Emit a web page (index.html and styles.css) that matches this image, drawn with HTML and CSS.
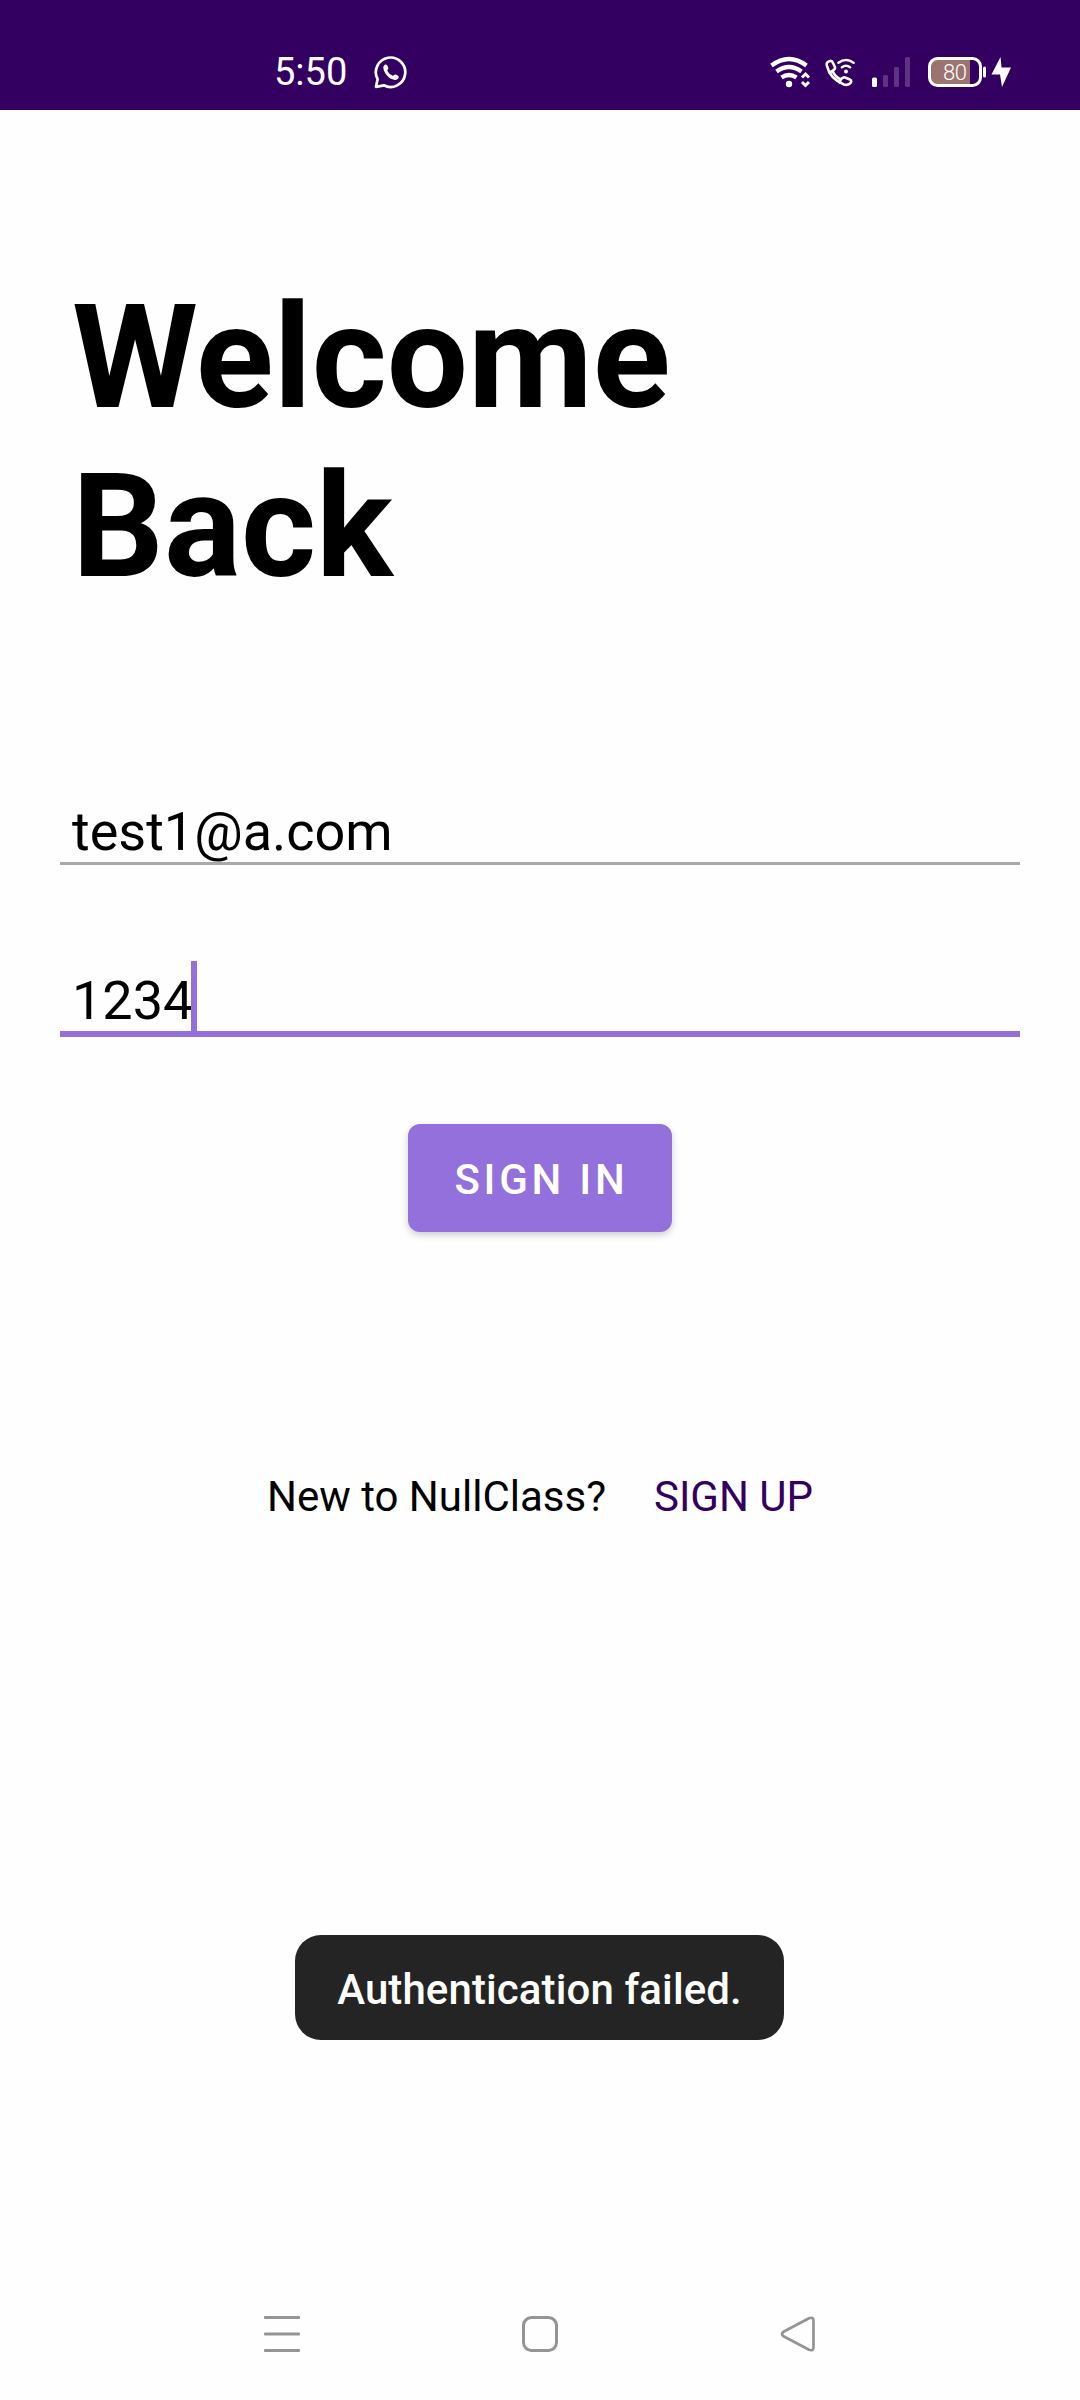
FILE: index.html
```html
<!DOCTYPE html>
<html lang="en">
<head>
<meta charset="utf-8">
<title>Sign in</title>
<link rel="stylesheet" href="styles.css">
</head>
<body>
<div class="screen">
  <header class="status">
    <span class="clock">5:50</span>
    <svg class="whatsapp" width="34" height="34" viewBox="0 0 34 34">
      <path d="M3.6 24.2A14.7 14.7 0 1 1 9.8 30.300L2 31.800Z" fill="none" stroke="#fff" stroke-width="2.700" stroke-linejoin="round"/>
      <path d="M9.300 12.500C9.100 10.800 10.900 9.200 12 9.400C13.200 9.600 14.300 12.100 14.300 13.200C14.200 14.200 13.100 14.700 13.300 15.400C14.400 17.800 16.300 19.600 18.700 20.700C19.600 21 20.200 19.600 21.200 19.600C22.300 19.700 24.700 20.900 24.800 22C24.900 23.600 22.700 25 20.800 24.900C15 24.100 9.800 18.200 9.300 12.500Z" fill="#fff"/>
    </svg>
    <div class="indicators">
      <svg width="260" height="34" viewBox="770 56 260 34">
        <g fill="none" stroke="#fff" stroke-width="4.200">
          <path d="M771.500 65.500Q789 52.500 806.500 65.500"/>
          <path d="M776.500 71.500Q789 62.500 801.500 71.500"/>
          <path d="M781.500 77.500Q789 72.500 796.500 77.500"/>
        </g>
        <circle cx="789" cy="84" r="3.200" fill="#fff"/>
        <path d="M802 77.500L805.500 74L809 77.500M802 82L805.500 85.500L809 82" fill="none" stroke="#fff" stroke-width="3"/>
        <g fill="none" stroke="#fff" stroke-width="2.600" stroke-linejoin="round" stroke-linecap="round">
          <path d="M827 66Q825.500 62 830 61Q832 60.500 833 63L835 67Q835.500 69 832.500 71Q835 76.500 840.500 79.500Q843 76.800 845 77.500L850 79.500Q852.500 81 850 83.500Q847.500 85.500 844 84.500Q830 79 827 66Z"/>
          <path d="M832.500 71L829.500 72.500M840.500 79.500L839.500 82.500"/>
          <path d="M838.500 62.700Q846 57.300 853.500 62.700M842 67.200Q846 64.300 850 67.200"/>
        </g>
        <circle cx="846" cy="71.500" r="2" fill="#fff"/>
        <rect x="872" y="77.500" width="5" height="9.500" rx="1.500" fill="#fff"/>
        <g fill="#5d3483">
          <rect x="883" y="75" width="5" height="12" rx="1.500"/>
          <rect x="894" y="67" width="5" height="20" rx="1.500"/>
          <rect x="905" y="57" width="5" height="30" rx="1.500"/>
        </g>
        <path d="M936 60H970V84H936Q930 84 930 78V66Q930 60 936 60Z" fill="#9b736f"/>
        <rect x="929.500" y="58.500" width="51" height="27" rx="8" fill="none" stroke="#fff" stroke-width="3"/>
        <rect x="983" y="66.500" width="3" height="11" rx="1.500" fill="#fff"/>
        <text class="level" x="943" y="79.500">80</text>
        <path d="M1000.500 57L991.500 74.500H1000L1002 87L1011 67.500H1001.500Z" fill="#fff"/>
      </svg>
    </div>
  </header>

  <main class="content">
    <h1 class="title">Welcome<br>Back</h1>
    <div class="field"><span class="value">test1@a.com</span></div>
    <div class="field field-focused"><span class="value">1234</span><span class="caret"></span></div>
    <button class="sign-in" type="button">SIGN IN</button>
    <p class="register"><span>New to NullClass?</span><a class="sign-up">SIGN UP</a></p>
    <div class="toast">Authentication failed.</div>
  </main>

  <nav class="navbar">
    <svg width="36" height="36" viewBox="0 0 36 36" fill="#949494">
      <rect width="36" height="3" rx="1"/><rect y="16.500" width="36" height="3" rx="1"/><rect y="33" width="36" height="3" rx="1"/>
    </svg>
    <svg width="36" height="36" viewBox="0 0 36 36">
      <rect x="1.500" y="1.500" width="33" height="33" rx="8" fill="none" stroke="#949494" stroke-width="3"/>
    </svg>
    <svg width="36" height="36" viewBox="0 0 36 36">
      <path d="M29 2.200L3.500 15.800Q0.500 18 3.500 20.200L29 33.800Q33.300 35.300 33.500 31.500V4.500Q33.300 0.700 29 2.200Z" fill="none" stroke="#949494" stroke-width="2.700" stroke-linejoin="round"/>
    </svg>
  </nav>
</div>
</body>
</html>
```
FILE: styles.css
```css
* { box-sizing: border-box; }
body { margin: 0; background: #fefefe; font-family: Roboto, sans-serif; color: #000; }
.screen { width: 1080px; height: 2400px; display: flex; flex-direction: column; }
.status { height: 110px; flex: none; background: #330062; color: #fff; display: flex; align-items: flex-start; padding: 0 50px 0 274px; }
.clock { font-size: 38px; line-height: 44px; margin-top: 50px; width: 100px; }
.whatsapp { margin-top: 55px; }
.indicators { margin: 56px 0 0 362px; height: 34px; }
.indicators svg { display: block; }
.level { font: 300 22px Roboto, sans-serif; letter-spacing: -0.5px; fill: #fff; }
.content { flex: 1; display: flex; flex-direction: column; align-items: center; padding: 163px 60px 0; }
.title { align-self: stretch; margin: 0 0 181px; padding: 0 12px; font-size: 144px; line-height: 169px; font-weight: 700; }
.field { align-self: stretch; display: flex; align-items: flex-end; height: 73px; padding: 0 12px; border-bottom: 3px solid #a9a9a9; font-size: 54px; line-height: 61px; }
.field-focused { height: 76px; margin-top: 96px; border-bottom: 6px solid #9370db; }
.caret { width: 6px; height: 70px; margin-left: -2px; background: #9370db; }
.sign-in { width: 264px; height: 108px; margin: 87px 0 0; padding: 4px 0 0 3px; border: 0; border-radius: 12px; background: #9370db; color: #fff; font: 500 42px/50px Roboto, sans-serif; letter-spacing: 3.750px; box-shadow: 0 3px 7px rgba(0, 0, 0, .2); }
.register { display: flex; gap: 48px; margin: 240px 0 0; font-size: 42px; line-height: 50px; }
.sign-up { color: #330062; }
.toast { margin: 413px 1px 0 0; width: 489px; height: 105px; padding-top: 4px; display: flex; align-items: center; justify-content: center; border-radius: 26px; background: #242424; color: #fff; font-size: 42px; font-weight: 500; letter-spacing: 0.1px; }
.navbar { flex: none; display: flex; justify-content: space-between; height: 84px; padding: 0 264px; }
```
